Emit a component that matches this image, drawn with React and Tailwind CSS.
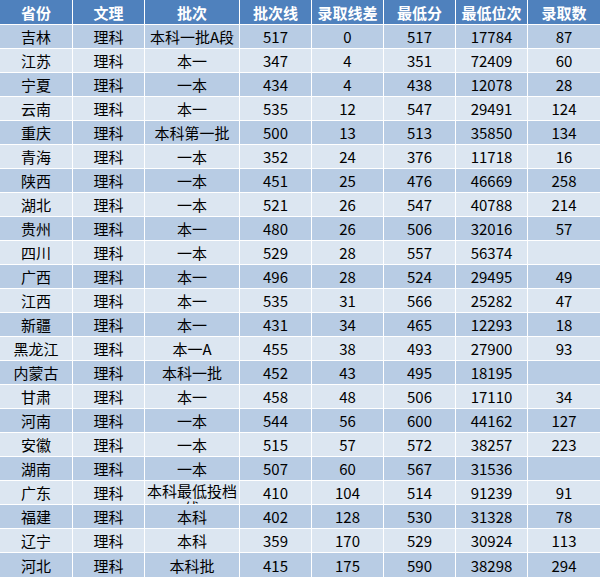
const headers = ['省份', '文理', '批次', '批次线', '录取线差', '最低分', '最低位次', '录取数'];

const rows = [
  ['吉林', '理科', '本科一批A段', '517', '0', '517', '17784', '87'],
  ['江苏', '理科', '本一', '347', '4', '351', '72409', '60'],
  ['宁夏', '理科', '一本', '434', '4', '438', '12078', '28'],
  ['云南', '理科', '本一', '535', '12', '547', '29491', '124'],
  ['重庆', '理科', '本科第一批', '500', '13', '513', '35850', '134'],
  ['青海', '理科', '一本', '352', '24', '376', '11718', '16'],
  ['陕西', '理科', '一本', '451', '25', '476', '46669', '258'],
  ['湖北', '理科', '一本', '521', '26', '547', '40788', '214'],
  ['贵州', '理科', '本一', '480', '26', '506', '32016', '57'],
  ['四川', '理科', '一本', '529', '28', '557', '56374', ''],
  ['广西', '理科', '本一', '496', '28', '524', '29495', '49'],
  ['江西', '理科', '本一', '535', '31', '566', '25282', '47'],
  ['新疆', '理科', '本一', '431', '34', '465', '12293', '18'],
  ['黑龙江', '理科', '本一A', '455', '38', '493', '27900', '93'],
  ['内蒙古', '理科', '本科一批', '452', '43', '495', '18195', ''],
  ['甘肃', '理科', '本一', '458', '48', '506', '17110', '34'],
  ['河南', '理科', '一本', '544', '56', '600', '44162', '127'],
  ['安徽', '理科', '一本', '515', '57', '572', '38257', '223'],
  ['湖南', '理科', '一本', '507', '60', '567', '31536', ''],
  ['广东', '理科', '本科最低投档线', '410', '104', '514', '91239', '91'],
  ['福建', '理科', '本科', '402', '128', '530', '31328', '78'],
  ['辽宁', '理科', '本科', '359', '170', '529', '30924', '113'],
  ['河北', '理科', '本科批', '415', '175', '590', '38298', '294'],
];

export default function App() {
  return (
    <div
      className="w-[600px] h-[577px] overflow-hidden bg-white text-[15px] text-black"
      style={{ fontFamily: '"Noto Sans CJK SC", "DejaVu Sans", sans-serif' }}
    >
      <div className="grid grid-cols-[72px_71px_94px_71px_71px_71px_71px_1fr] gap-px">
        {headers.map((h) => (
          <div
            key={h}
            className="h-[24px] bg-[#4f81bd] text-white font-bold flex items-center justify-center leading-none"
          >
            {h}
          </div>
        ))}

        {rows.map((row, i) => {
          const bg = i % 2 === 0 ? 'bg-[#b8cce4]' : 'bg-[#dce6f1]';
          const last = i === rows.length - 1;
          return row.map((cell, j) => {
            const height = last ? 'h-[24px]' : 'h-[23px]';
            if (j === 2 && cell.length > 6) {
              // wraps in the original sheet, second line clipped
              return (
                <div key={j} className={`${height} ${bg} overflow-hidden text-center leading-[17px] pt-[1px]`}>
                  {cell}
                </div>
              );
            }
            return (
              <div
                key={j}
                className={`${height} ${bg} flex items-center leading-none ${
                  j === 3 ? 'justify-end pr-[23px]' : 'justify-center'
                }`}
              >
                {cell}
              </div>
            );
          });
        })}
      </div>
    </div>
  );
}
